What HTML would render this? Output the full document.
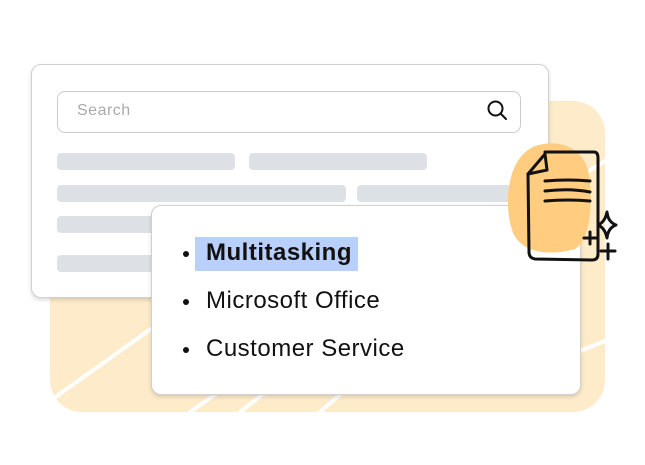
<!DOCTYPE html>
<html><head><style>
body{margin:0;width:645px;height:465px;background:#fff;position:relative;overflow:hidden;font-family:"Liberation Sans",sans-serif}
.bg{position:absolute;left:50px;top:101px;width:555px;height:311px;background:#feebca;border-radius:32px;overflow:hidden}
.card{position:absolute;background:#fff;border:1px solid #d0d0d0;border-radius:10px;box-shadow:0 2px 4px rgba(0,0,0,.15)}
.bar{position:absolute;height:17px;background:#dde1e6;border-radius:4px}
.li{position:absolute;left:206px;font-size:24px;color:#111;line-height:34px;letter-spacing:.5px}
.dot{position:absolute;left:183px;width:6px;height:6px;border-radius:50%;background:#111}
</style></head><body>
<div class="bg">
<svg width="555" height="311" style="position:absolute;left:0;top:0" fill="none" stroke="#fff" stroke-width="4" stroke-linecap="round">
<path d="M0 170 L60 130"/><path d="M0 300 L140 200 L230 150"/><path d="M140 311 L170 290"/><path d="M190 311 L230 280"/><path d="M270 311 L300 285"/><path d="M450 30 L500 -5"/><path d="M490 100 L555 60"/><path d="M530 250 L555 240"/>
</svg>
</div>
<div class="card" style="left:31px;top:64px;width:516px;height:232px">
<div style="position:absolute;left:25px;top:26px;width:462px;height:40px;border:1px solid #ccc;border-radius:8px"></div>
<div style="position:absolute;left:45px;top:37px;font-size:16px;color:#aaa;letter-spacing:.5px">Search</div>
<svg style="position:absolute;left:454px;top:34px" width="24" height="24" fill="none" stroke="#111" stroke-width="2" stroke-linecap="round"><circle cx="9.5" cy="9.5" r="7"/><path d="M14.5 14.5 L20 20"/></svg>
</div>
<div class="bar" style="left:57px;top:153px;width:178px"></div>
<div class="bar" style="left:249px;top:153px;width:178px"></div>
<div class="bar" style="left:57px;top:185px;width:289px"></div>
<div class="bar" style="left:357px;top:185px;width:160px"></div>
<div class="bar" style="left:57px;top:216px;width:100px"></div>
<div class="bar" style="left:57px;top:255px;width:100px"></div>
<div class="card" style="left:151px;top:205px;width:428px;height:188px"></div>
<div style="position:absolute;left:195px;top:237px;width:163px;height:34px;background:#b8d0fb"></div>
<div class="dot" style="top:251px"></div>
<div class="li" style="top:236px;font-weight:bold">Multitasking</div>
<div class="dot" style="top:299px"></div>
<div class="li" style="top:284px">Microsoft Office</div>
<div class="dot" style="top:347px"></div>
<div class="li" style="top:332px">Customer Service</div>
<svg style="position:absolute;left:0;top:0" width="645" height="465" fill="none" stroke="#111" stroke-width="3" stroke-linecap="round" stroke-linejoin="round">
<path d="M535 146 C560 138 585 148 589 175 C593 205 590 240 575 249 C550 256 520 254 512 230 C504 205 506 158 535 146Z" fill="#ffcc80" stroke="none"/>
<path d="M545 152 L594 152 Q598 152 598 158 L598 254 Q598 260 592 260 L535 259 Q529 258 529 252 L528 174"/>
<path d="M528 174 L545 154 L547 170 L528 174"/>
<path d="M545 181 Q568 179 590 181 M545 191 Q570 188 590 192 M545 201 Q568 199 590 201"/>
<path d="M607 212 Q608 222 616 225 Q608 228 607 238 Q605 228 598 225 Q605 222 607 212Z"/>
<path d="M590 232 l0 12 M584 238 l12 0"/>
<path d="M608 244 l0 15 M601 251 l14 0"/>
</svg>
</body></html>
